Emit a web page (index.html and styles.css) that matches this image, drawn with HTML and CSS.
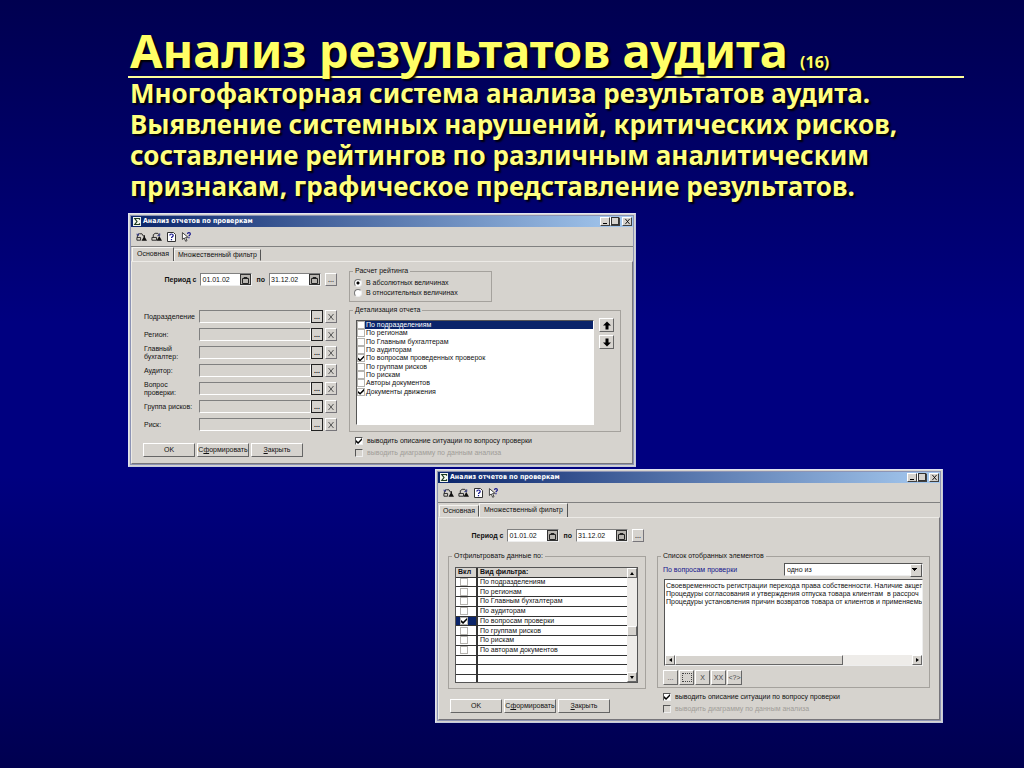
FILE: index.html
```
<!DOCTYPE html>
<html lang="ru">
<head>
    <meta charset="utf-8">
    <title>Анализ результатов аудита</title>
    <link rel="stylesheet" href="styles.css">
</head>

<body>
    <svg class="sprite" aria-hidden="true">
        <symbol id="icon-app" viewBox="0 0 8 9"><path fill="#f4f8ee" d="M0 0h8v9H0z"/><path fill="none" stroke="#1c3a20" stroke-width="1.2" d="M6.5 2.7V1.5H1.8L4 4.5 1.8 7.5h4.7V6.3"/></symbol>
        <symbol id="icon-back" viewBox="0 0 12 10"><path fill="none" stroke="#222" d="M1 5.5h4v3H1zM1.500 5.500V3l2-1.500h3L8 4"/><path fill="none" stroke="#222a80" d="M.5 1.500l2 2M2.500 1v2.500"/><path fill="#111" d="M9 4l3 5H6zM8.200 3h1.600v3H8.200z"/></symbol>
        <symbol id="icon-next" viewBox="0 0 12 10"><path fill="none" stroke="#222" d="M1 5.500h5v3H1zM2.500 5.500V2.500l2-1.500h3l1.500 2"/><path fill="none" stroke="#222a80" d="M7 3.500h2.500V1"/><path fill="#111" d="M9 4l3 5H6z"/></symbol>
        <symbol id="icon-help" viewBox="0 0 9 10"><path fill="#fff" stroke="#333" d="M.5.5h6l2 2v7h-8z"/><path fill="none" stroke="#14148c" stroke-width="1.200" d="M2.800 3.500c0-2 3.400-2 3.400 0 0 1.300-1.700 1.200-1.700 2.600M4.500 7v1.200"/></symbol>
        <symbol id="icon-what" viewBox="0 0 11 11"><path fill="#fff" stroke="#222" stroke-width=".9" d="M1 .7v7.500l2-1.700 1.600 3.700 1.500-.7-1.600-3.500 2.500-.3z"/><path fill="none" stroke="#14148c" stroke-width="1.200" d="M6.600 2.200c0-2 3.200-2 3.200 0 0 1.200-1.600 1.100-1.600 2.500M8.200 5.600v1.200"/></symbol>
        <symbol id="icon-date" viewBox="0 0 7 8"><path fill="none" stroke="#222" d="M.5 7.500v-5h6v5zM2 2.500v-1h3v1"/></symbol>
        <symbol id="icon-up" viewBox="0 0 8 8"><path d="M4 0l4 4H5.500v4h-3V4H0z"/></symbol>
        <symbol id="icon-down" viewBox="0 0 8 8"><path d="M4 8l4-4H5.500V0h-3v4H0z"/></symbol>
        <symbol id="icon-cross" viewBox="0 0 8 8"><path fill="none" stroke="currentColor" d="M1.500 1l5 6M6.500 1l-5 6"/></symbol>
    </svg>

    <main class="slide">
        <header class="heading">
            <h1>Анализ результатов аудита <small>(16)</small></h1>
            <p>Многофакторная система анализа результатов аудита. Выявление системных нарушений, критических рисков, составление рейтингов по различным аналитическим признакам, графическое представление результатов.</p>
        </header>

        <section class="window">
            <div class="titlebar">
                <svg class="app-icon"><use href="#icon-app"/></svg>
                <h2>Анализ отчетов по проверкам</h2>
                <button class="sys minimize" aria-label="Свернуть"></button>
                <button class="sys maximize" aria-label="Развернуть"></button>
                <button class="sys close" aria-label="Закрыть окно"><svg><use href="#icon-cross"/></svg></button>
            </div>
            <div class="toolbar">
                <button aria-label="Назад"><svg><use href="#icon-back"/></svg></button>
                <button aria-label="Вперед"><svg><use href="#icon-next"/></svg></button>
                <button aria-label="Справка"><svg><use href="#icon-help"/></svg></button>
                <button aria-label="Что это"><svg><use href="#icon-what"/></svg></button>
            </div>
            <div class="tabs">
                <button class="tab active">Основная</button>
                <button class="tab">Множественный фильтр</button>
            </div>
            <div class="panel main-panel">
                <div class="left">
                    <div class="period">
                        <label for="from1">Период с</label>
                        <span class="date"><input id="from1" value="01.01.02"><button aria-label="Календарь"><svg><use href="#icon-date"/></svg></button></span>
                        <label for="to1">по</label>
                        <span class="date"><input id="to1" value="31.12.02"><button aria-label="Календарь"><svg><use href="#icon-date"/></svg></button></span>
                        <button class="square">...</button>
                    </div>
                    <div class="fields">
                        <div class="field"><label for="f1">Подразделение</label><input id="f1"><button class="pick">...</button><button class="square clear" aria-label="Очистить"><svg><use href="#icon-cross"/></svg></button></div>
                        <div class="field"><label for="f2">Регион:</label><input id="f2"><button class="pick">...</button><button class="square clear" aria-label="Очистить"><svg><use href="#icon-cross"/></svg></button></div>
                        <div class="field"><label for="f3">Главный<br>бухгалтер:</label><input id="f3"><button class="pick">...</button><button class="square clear" aria-label="Очистить"><svg><use href="#icon-cross"/></svg></button></div>
                        <div class="field"><label for="f4">Аудитор:</label><input id="f4"><button class="pick">...</button><button class="square clear" aria-label="Очистить"><svg><use href="#icon-cross"/></svg></button></div>
                        <div class="field"><label for="f5">Вопрос<br>проверки:</label><input id="f5"><button class="pick">...</button><button class="square clear" aria-label="Очистить"><svg><use href="#icon-cross"/></svg></button></div>
                        <div class="field"><label for="f6">Группа рисков:</label><input id="f6"><button class="pick">...</button><button class="square clear" aria-label="Очистить"><svg><use href="#icon-cross"/></svg></button></div>
                        <div class="field"><label for="f7">Риск:</label><input id="f7"><button class="pick">...</button><button class="square clear" aria-label="Очистить"><svg><use href="#icon-cross"/></svg></button></div>
                    </div>
                    <div class="actions">
                        <button>OK</button>
                        <button>С<u>ф</u>ормировать</button>
                        <button><u>З</u>акрыть</button>
                    </div>
                </div>
                <div class="right">
                    <fieldset class="rating">
                        <legend>Расчет рейтинга</legend>
                        <label><input type="radio" name="rating" checked>В абсолютных величинах</label>
                        <label><input type="radio" name="rating">В относительных величинах</label>
                    </fieldset>
                    <fieldset class="details">
                        <legend>Детализация отчета</legend>
                        <div class="checklist">
                            <label class="selected"><input type="checkbox">По подразделениям</label>
                            <label><input type="checkbox">По регионам</label>
                            <label><input type="checkbox">По Главным бухгалтерам</label>
                            <label><input type="checkbox">По аудиторам</label>
                            <label><input type="checkbox" checked>По вопросам проведенных проверок</label>
                            <label><input type="checkbox">По группам рисков</label>
                            <label><input type="checkbox">По рискам</label>
                            <label><input type="checkbox">Авторы документов</label>
                            <label><input type="checkbox" checked>Документы движения</label>
                        </div>
                        <div class="order">
                            <button aria-label="Вверх"><svg><use href="#icon-up"/></svg></button>
                            <button aria-label="Вниз"><svg><use href="#icon-down"/></svg></button>
                        </div>
                    </fieldset>
                    <div class="options">
                        <label><input type="checkbox" checked>выводить описание ситуации по вопросу проверки</label>
                        <label class="disabled"><input type="checkbox" disabled>выводить диаграмму по данным анализа</label>
                    </div>
                </div>
            </div>
        </section>

        <section class="window second">
            <div class="titlebar">
                <svg class="app-icon"><use href="#icon-app"/></svg>
                <h2>Анализ отчетов по проверкам</h2>
                <button class="sys minimize" aria-label="Свернуть"></button>
                <button class="sys maximize" aria-label="Развернуть"></button>
                <button class="sys close" aria-label="Закрыть окно"><svg><use href="#icon-cross"/></svg></button>
            </div>
            <div class="toolbar">
                <button aria-label="Назад"><svg><use href="#icon-back"/></svg></button>
                <button aria-label="Вперед"><svg><use href="#icon-next"/></svg></button>
                <button aria-label="Справка"><svg><use href="#icon-help"/></svg></button>
                <button aria-label="Что это"><svg><use href="#icon-what"/></svg></button>
            </div>
            <div class="tabs">
                <button class="tab">Основная</button>
                <button class="tab active">Множественный фильтр</button>
            </div>
            <div class="panel filter-panel">
                <div class="left">
                    <div class="period">
                        <label for="from2">Период с</label>
                        <span class="date"><input id="from2" value="01.01.02"><button aria-label="Календарь"><svg><use href="#icon-date"/></svg></button></span>
                        <label for="to2">по</label>
                        <span class="date"><input id="to2" value="31.12.02"><button aria-label="Календарь"><svg><use href="#icon-date"/></svg></button></span>
                        <button class="square">...</button>
                    </div>
                    <fieldset class="filters">
                        <legend>Отфильтровать данные по:</legend>
                        <div class="grid">
                            <table>
                                <thead><tr><th>Вкл</th><th>Вид фильтра:</th></tr></thead>
                                <tbody>
                                    <tr><td><input type="checkbox" aria-label="По подразделениям"></td><td>По подразделениям</td></tr>
                                    <tr><td><input type="checkbox" aria-label="По регионам"></td><td>По регионам</td></tr>
                                    <tr><td><input type="checkbox" aria-label="По Главным бухгалтерам"></td><td>По Главным бухгалтерам</td></tr>
                                    <tr><td><input type="checkbox" aria-label="По аудиторам"></td><td>По аудиторам</td></tr>
                                    <tr class="current"><td><input type="checkbox" checked aria-label="По вопросам проверки"></td><td>По вопросам проверки</td></tr>
                                    <tr><td><input type="checkbox" aria-label="По группам рисков"></td><td>По группам рисков</td></tr>
                                    <tr><td><input type="checkbox" aria-label="По рискам"></td><td>По рискам</td></tr>
                                    <tr><td><input type="checkbox" aria-label="По авторам документов"></td><td>По авторам документов</td></tr>
                                    <tr><td></td><td></td></tr>
                                    <tr><td></td><td></td></tr>
                                    <tr><td></td><td></td></tr>
                                </tbody>
                            </table>
                            <div class="vscroll">
                                <button class="arrow up" aria-label="Вверх"></button>
                                <span class="thumb"></span>
                                <button class="arrow down" aria-label="Вниз"></button>
                            </div>
                        </div>
                    </fieldset>
                    <div class="actions">
                        <button>OK</button>
                        <button>С<u>ф</u>ормировать</button>
                        <button><u>З</u>акрыть</button>
                    </div>
                </div>
                <div class="right">
                    <fieldset class="picked">
                        <legend>Список отобранных элементов</legend>
                        <div class="condition">
                            <label for="cond">По вопросам проверки</label>
                            <span class="combo"><select id="cond"><option>одно из</option></select></span>
                        </div>
                        <div class="listbox">
                            <ul>
                                <li>Своевременность регистрации перехода права собственности. Наличие акцеп</li>
                                <li>Процедуры согласования и утверждения отпуска товара клиентам&nbsp; в рассроч</li>
                                <li>Процедуры установления причин возвратов товара от клиентов и применяемы</li>
                            </ul>
                            <div class="hscroll">
                                <button class="arrow prev" aria-label="Влево"></button>
                                <span class="thumb"></span>
                                <button class="arrow next" aria-label="Вправо"></button>
                            </div>
                        </div>
                        <div class="tools">
                            <button>...</button>
                            <button aria-label="Выбрать группу"><span class="dots"></span></button>
                            <button>X</button>
                            <button>XX</button>
                            <button>&lt;?&gt;</button>
                        </div>
                    </fieldset>
                    <div class="options">
                        <label><input type="checkbox" checked>выводить описание ситуации по вопросу проверки</label>
                        <label class="disabled"><input type="checkbox" disabled>выводить диаграмму по данным анализа</label>
                    </div>
                </div>
            </div>
        </section>
    </main>
</body>
</html>
```
FILE: styles.css
```
* {
    box-sizing: border-box;
}
body {
    margin: 0;
    min-height: 100vh;
    background: linear-gradient(#000050, #000080 42%, #000080 62%, #000050);
    font-family: "Liberation Sans", Arial, sans-serif;
    font-size: 7px;
    line-height: 8px;
    color: #111;
}
button, input, select {
    font: inherit;
    color: inherit;
    margin: 0;
    padding: 0;
    border: 0;
    border-radius: 0;
}
button {
    display: flex;
    align-items: center;
    justify-content: center;
    background: #d6d3ce;
    white-space: nowrap;
}
svg {
    display: block;
}
.sprite {
    display: none;
}
.slide {
    display: flex;
    flex-direction: column;
    align-items: flex-start;
    padding: 24px 60px 44px 128px;
}

/* heading */
.heading {
    width: 100%;
    margin-bottom: 11px;
    color: #ffff66;
    font-family: "Noto Sans", Tahoma, sans-serif;
    font-weight: bold;
    text-shadow: 2px 2px 2px #000;
}
h1 {
    height: 54px;
    margin: 0;
    padding-left: 2px;
    border-bottom: 2px solid #ffff99;
    font-size: 47px;
    line-height: 52px;
    white-space: nowrap;
}
h1 small {
    font-size: 16px;
    line-height: 16px;
}
.heading p {
    max-width: 780px;
    margin: 0;
    padding-left: 2px;
    color: #ffff80;
    font-size: 26px;
    line-height: 31px;
}

/* window frame */
.window {
    width: 100%;
    max-width: 508px;
    border: 1px solid;
    border-color: #dfe3f2 #c3cae0 #c3cae0 #dfe3f2;
    padding: 1px 2px 2px;
    background: #d6d3ce;
    outline: 1px solid #8c93b4;
    outline-offset: -3px;
}
.second {
    align-self: flex-end;
    margin: 2px 21px 0 0;
}
.titlebar {
    display: flex;
    align-items: center;
    height: 12px;
    padding: 0 1px 0 2px;
    background: linear-gradient(90deg, #0a246a, #a6caf0);
    color: #fff;
}
.app-icon {
    width: 8px;
    height: 9px;
}
.titlebar h2 {
    flex: 1;
    margin: 0 0 0 2px;
    font-family: "DejaVu Sans Condensed", "DejaVu Sans", sans-serif;
    font-size: 7px;
    line-height: 12px;
}
.sys {
    width: 10px;
    height: 9px;
    border: 1px solid;
    border-color: #fff #404040 #404040 #fff;
    color: #000;
}
.minimize::before {
    content: "";
    width: 4px;
    height: 5px;
    border-bottom: 1px solid #000;
}
.maximize::before {
    content: "";
    width: 6px;
    height: 6px;
    border: 1px solid #333;
}
.close {
    margin-left: 2px;
}
.close svg {
    width: 7px;
    height: 7px;
}
.toolbar {
    display: flex;
    align-items: center;
    gap: 3px;
    height: 20px;
    padding-left: 4px;
    border-bottom: 1px solid #808080;
}
.toolbar button {
    width: 12px;
    height: 12px;
}
.toolbar svg {
    width: 11px;
    height: 10px;
}

/* tabs */
.tabs {
    display: flex;
    align-items: flex-end;
    height: 14px;
    padding-left: 1px;
}
.tab {
    height: 12px;
    padding: 0 3px;
    border: 1px solid;
    border-color: #f4f3f0 #555 transparent #f4f3f0;
}
.tab.active {
    height: 14px;
    padding: 0 4px 2px;
    border-bottom: 0;
}
.panel {
    display: flex;
    height: 203px;
    border: 1px solid;
    border-color: #eceae6 #77757a #77757a #eceae6;
}
.left {
    flex: none;
    width: 205px;
    padding-left: 11px;
}
.right {
    flex: 1;
    min-width: 0;
}

/* period */
.period {
    display: flex;
    align-items: center;
    justify-content: flex-end;
    gap: 4px;
    height: 13px;
    margin-top: 11px;
    font-weight: bold;
    white-space: nowrap;
}
.date {
    display: flex;
    width: 52px;
    height: 13px;
    border: 1px solid;
    border-color: #808080 #eee #eee #808080;
    background: #fff;
    font-weight: normal;
}
.date input {
    flex: 1;
    width: 10px;
    padding-left: 1px;
    background: none;
}
.date button {
    width: 11px;
    border: 1px solid #333;
    background: #b8b5b0;
}
.date svg {
    width: 7px;
    height: 8px;
}
.square {
    width: 12px;
    height: 13px;
    border: 1px solid;
    border-color: #fff #77757a #77757a #fff;
    color: #555;
}

/* main tab */
.main-panel .right {
    padding: 5px 11px 0 12px;
}
.fields {
    display: grid;
    gap: 5px;
    margin-top: 24px;
}
.field {
    display: flex;
    align-items: center;
    height: 13px;
}
.field label {
    width: 56px;
    padding-left: 1px;
}
.field input {
    flex: 1;
    width: 40px;
    height: 13px;
    border: 1px solid;
    border-color: #808080 #fff #fff #808080;
    background: #d6d3ce;
}
.pick {
    width: 12px;
    height: 13px;
    border: 1px solid #222;
    font-weight: bold;
}
.clear {
    margin-left: 2px;
}
.clear svg {
    width: 8px;
    height: 8px;
}
.actions {
    display: flex;
    gap: 2px;
    margin-top: 12px;
}
.actions button {
    width: 52px;
    height: 14px;
    border: 1px solid;
    border-color: #fff #666 #666 #fff;
}
fieldset {
    min-width: 0;
    margin: 0;
    padding: 0;
    border: 1px solid #a5a29d;
}
legend {
    margin-left: 3px;
    padding: 0 2px;
}
.rating {
    width: 143px;
    height: 35px;
    padding-top: 3px;
}
.rating label {
    display: flex;
    align-items: center;
    gap: 4px;
    height: 10px;
    padding-left: 4px;
}
input[type="radio"] {
    appearance: none;
    width: 8px;
    height: 8px;
    border: 1px solid;
    border-color: #777 #eee #eee #777;
    border-radius: 50%;
    background: #fff;
}
input[type="radio"]:checked {
    background: radial-gradient(#000 1px, #fff 2px);
}
input[type="checkbox"] {
    appearance: none;
    display: block;
    flex: none;
    width: 8px;
    height: 8px;
    border: 1px solid #b5b3af;
    background: #fff;
}
input[type="checkbox"]:checked::after {
    content: "";
    display: block;
    width: 6px;
    height: 6px;
    background: #000;
    clip-path: polygon(0 35%, 35% 65%, 100% 0, 100% 35%, 35% 100%, 0 70%);
}
.details {
    display: flex;
    height: 126px;
    margin-top: 4px;
}
.checklist {
    display: grid;
    grid-template-rows: repeat(9, 1fr);
    width: 238px;
    height: 105px;
    margin: 6px 5px 0 6px;
    padding-bottom: 28px;
    border: 1px solid;
    border-color: #555 #fff #fff #555;
    background: #fff;
}
.checklist label {
    display: flex;
    align-items: center;
    gap: 1px;
}
.checklist .selected {
    background: #0a246a;
    color: #fff;
}
.order {
    display: grid;
    gap: 3px;
    align-content: start;
    padding-top: 4px;
}
.order button {
    width: 15px;
    height: 14px;
    border: 1px solid;
    border-color: #fff #666 #666 #fff;
}
.order svg {
    width: 8px;
    height: 9px;
}
.options {
    display: grid;
    gap: 4px;
    margin-top: 5px;
    padding-left: 6px;
}
.options label {
    display: flex;
    align-items: center;
    gap: 4px;
}
.options input[type="checkbox"] {
    border-color: #555 #eee #eee #555;
}
.options .disabled {
    color: #a09d98;
}
.options .disabled input {
    background: #d6d3ce;
}

/* filter tab */
.filter-panel .left {
    width: 207px;
}
.filter-panel .period {
    margin-right: 2px;
}
.filter-panel .right {
    padding: 34px 9px 0 11px;
}
.filters {
    height: 137px;
    margin: 10px 0 0 -2px;
}
.grid {
    display: flex;
    height: 116px;
    margin: 7px 7px 0 6px;
    border: 1px solid #555;
    background: #fff;
    overflow: hidden;
}
.grid table {
    flex: 1;
    height: 117px;
    border-collapse: collapse;
    table-layout: fixed;
}
.grid th, .grid td {
    height: 9px;
    padding: 0 0 0 2px;
    border-bottom: 1px solid #333;
    line-height: 8px;
    text-align: left;
}
.grid th {
    background: #d6d3ce;
}
.grid th:first-child, .grid td:first-child {
    width: 21px;
    border-right: 2px solid #333;
}
.grid td input {
    margin-left: 2px;
}
.grid .current td:first-child {
    background: #0a246a;
}
.vscroll {
    display: flex;
    flex-direction: column;
    width: 10px;
    background: #eeece9;
}
.arrow, .thumb {
    border: 1px solid;
    border-color: #fff #666 #666 #fff;
    background: #d6d3ce;
}
.arrow {
    flex: none;
    width: 10px;
    height: 10px;
}
.arrow::before {
    content: "";
    border: 2px solid transparent;
}
.arrow.up::before {
    border-top: 0;
    border-bottom: 3px solid #000;
}
.arrow.down::before {
    border-bottom: 0;
    border-top: 3px solid #000;
}
.arrow.prev::before {
    border-left: 0;
    border-right: 3px solid #000;
}
.arrow.next::before {
    border-right: 0;
    border-left: 3px solid #000;
}
.vscroll .thumb {
    height: 10px;
    margin: auto 0 36px;
}
.filter-panel .actions {
    margin-top: 10px;
}
.picked {
    height: 136px;
}
.condition {
    display: flex;
    align-items: center;
    justify-content: space-between;
    height: 13px;
    margin: 3px 6px 3px 5px;
    color: #14148c;
}
.combo {
    position: relative;
    width: 139px;
    color: #111;
}
.combo select {
    display: block;
    appearance: none;
    width: 100%;
    height: 13px;
    padding-left: 2px;
    border: 1px solid;
    border-color: #555 #eee #eee #555;
    background: #fff;
}
.combo::after {
    content: "";
    position: absolute;
    right: 1px;
    top: 1px;
    width: 10px;
    height: 11px;
    border: 1px solid;
    border-color: #fff #555 #555 #fff;
    background: linear-gradient(#000, #000) 1px 3px / 5px 1px no-repeat, linear-gradient(#000, #000) 2px 4px / 3px 1px no-repeat, linear-gradient(#000, #000) 3px 5px / 1px 1px no-repeat, #d6d3ce;
    pointer-events: none;
}
.listbox {
    display: flex;
    flex-direction: column;
    height: 87px;
    margin: 0 6px;
    border: 1px solid;
    border-color: #555 #eee #eee #555;
    background: #fff;
}
.listbox ul {
    flex: 1;
    margin: 0;
    padding: 2px 0 0 1px;
    list-style: none;
    overflow: hidden;
    white-space: nowrap;
}
.hscroll {
    display: flex;
    height: 10px;
    background: #eeece9;
}
.hscroll .thumb {
    width: 168px;
    margin-right: auto;
}
.tools {
    display: flex;
    gap: 1px;
    margin: 4px 5px;
}
.tools button {
    width: 15px;
    height: 15px;
    border: 1px solid;
    border-color: #fff #666 #666 #fff;
    color: #444;
}
.dots {
    width: 10px;
    height: 9px;
    border: 1px dotted #444;
}
```
